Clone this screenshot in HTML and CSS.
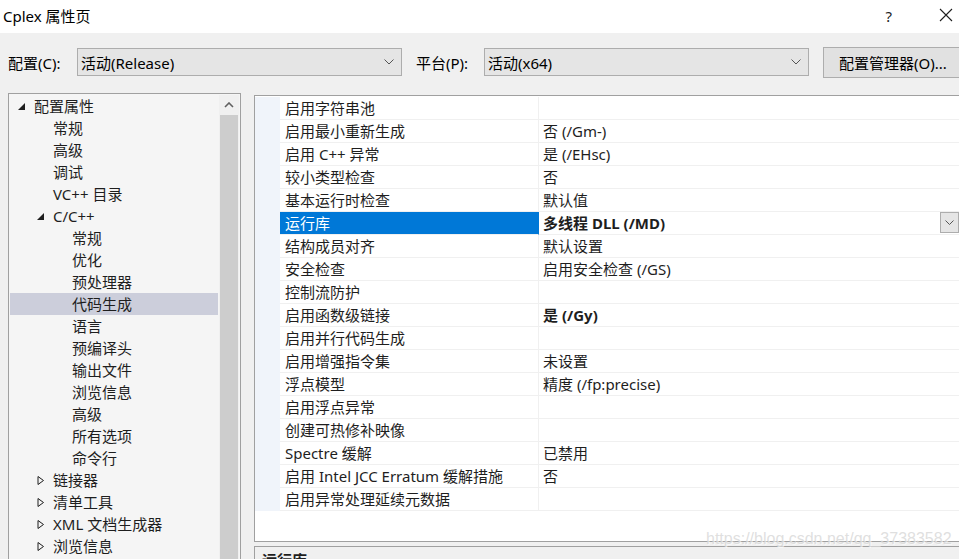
FILE: index.html
```html
<!DOCTYPE html>
<html lang="zh-CN">
<head>
    <meta charset="UTF-8">
    <title>Cplex 属性页</title>
    <link rel="stylesheet" href="styles.css">
</head>
<body>
    <div class="titlebar">
        <span class="title">Cplex 属性页</span>
        <span class="help">?</span>
        <svg class="close" width="14" height="14" viewBox="0 0 14 14"><path d="M1 1 L13 13 M13 1 L1 13" stroke="#1e1e1e" stroke-width="1.1"/></svg>
    </div>

    <div class="toolbar">
        <span class="label">配置(C):</span>
        <div class="combo combo-cfg">
            <span>活动(Release)</span>
            <svg width="10" height="6" viewBox="0 0 10 6"><polyline points="0.5,0.5 5,5 9.5,0.5" fill="none" stroke="#555"/></svg>
        </div>
        <span class="label label-plat">平台(P):</span>
        <div class="combo combo-plat">
            <span>活动(x64)</span>
            <svg width="10" height="6" viewBox="0 0 10 6"><polyline points="0.5,0.5 5,5 9.5,0.5" fill="none" stroke="#555"/></svg>
        </div>
        <button class="btn">配置管理器(O)...</button>
    </div>

    <div class="main">
        <div class="tree">
            <div class="tree-list">
                <div class="node lv0"><span class="twisty"><svg width="7" height="7"><polygon points="7,0 7,7 0,7" fill="#1e1e1e"/></svg></span>配置属性</div>
                <div class="node lv1"><span class="twisty"></span>常规</div>
                <div class="node lv1"><span class="twisty"></span>高级</div>
                <div class="node lv1"><span class="twisty"></span>调试</div>
                <div class="node lv1"><span class="twisty"></span>VC++ 目录</div>
                <div class="node lv1"><span class="twisty"><svg width="7" height="7"><polygon points="7,0 7,7 0,7" fill="#1e1e1e"/></svg></span>C/C++</div>
                <div class="node lv2"><span class="twisty"></span>常规</div>
                <div class="node lv2"><span class="twisty"></span>优化</div>
                <div class="node lv2"><span class="twisty"></span>预处理器</div>
                <div class="node lv2 selected"><span class="twisty"></span>代码生成</div>
                <div class="node lv2"><span class="twisty"></span>语言</div>
                <div class="node lv2"><span class="twisty"></span>预编译头</div>
                <div class="node lv2"><span class="twisty"></span>输出文件</div>
                <div class="node lv2"><span class="twisty"></span>浏览信息</div>
                <div class="node lv2"><span class="twisty"></span>高级</div>
                <div class="node lv2"><span class="twisty"></span>所有选项</div>
                <div class="node lv2"><span class="twisty"></span>命令行</div>
                <div class="node lv1"><span class="twisty"><svg width="7" height="9"><polygon points="1,0.5 6.5,4.5 1,8.5" fill="none" stroke="#1e1e1e"/></svg></span>链接器</div>
                <div class="node lv1"><span class="twisty"><svg width="7" height="9"><polygon points="1,0.5 6.5,4.5 1,8.5" fill="none" stroke="#1e1e1e"/></svg></span>清单工具</div>
                <div class="node lv1"><span class="twisty"><svg width="7" height="9"><polygon points="1,0.5 6.5,4.5 1,8.5" fill="none" stroke="#1e1e1e"/></svg></span>XML 文档生成器</div>
                <div class="node lv1"><span class="twisty"><svg width="7" height="9"><polygon points="1,0.5 6.5,4.5 1,8.5" fill="none" stroke="#1e1e1e"/></svg></span>浏览信息</div>
            </div>
            <div class="scrollbar">
                <div class="scroll-up"><svg width="10" height="6" viewBox="0 0 10 6"><polyline points="1,5 5,1 9,5" fill="none" stroke="#606060" stroke-width="1.6"/></svg></div>
                <div class="scroll-thumb"></div>
            </div>
        </div>

        <div class="right">
            <div class="grid">
                <div class="prop"><span class="gutter"></span><span class="name">启用字符串池</span><span class="value"></span></div>
                <div class="prop"><span class="gutter"></span><span class="name">启用最小重新生成</span><span class="value">否 (/Gm-)</span></div>
                <div class="prop"><span class="gutter"></span><span class="name">启用 C++ 异常</span><span class="value">是 (/EHsc)</span></div>
                <div class="prop"><span class="gutter"></span><span class="name">较小类型检查</span><span class="value">否</span></div>
                <div class="prop"><span class="gutter"></span><span class="name">基本运行时检查</span><span class="value">默认值</span></div>
                <div class="prop active"><span class="gutter"></span><span class="name">运行库</span><span class="value"><b>多线程 DLL (/MD)</b><span class="drop"><svg width="9" height="5" viewBox="0 0 9 5"><polyline points="0.5,0.5 4.5,4.5 8.5,0.5" fill="none" stroke="#555"/></svg></span></span></div>
                <div class="prop"><span class="gutter"></span><span class="name">结构成员对齐</span><span class="value">默认设置</span></div>
                <div class="prop"><span class="gutter"></span><span class="name">安全检查</span><span class="value">启用安全检查 (/GS)</span></div>
                <div class="prop"><span class="gutter"></span><span class="name">控制流防护</span><span class="value"></span></div>
                <div class="prop"><span class="gutter"></span><span class="name">启用函数级链接</span><span class="value"><b>是 (/Gy)</b></span></div>
                <div class="prop"><span class="gutter"></span><span class="name">启用并行代码生成</span><span class="value"></span></div>
                <div class="prop"><span class="gutter"></span><span class="name">启用增强指令集</span><span class="value">未设置</span></div>
                <div class="prop"><span class="gutter"></span><span class="name">浮点模型</span><span class="value">精度 (/fp:precise)</span></div>
                <div class="prop"><span class="gutter"></span><span class="name">启用浮点异常</span><span class="value"></span></div>
                <div class="prop"><span class="gutter"></span><span class="name">创建可热修补映像</span><span class="value"></span></div>
                <div class="prop"><span class="gutter"></span><span class="name">Spectre 缓解</span><span class="value">已禁用</span></div>
                <div class="prop"><span class="gutter"></span><span class="name">启用 Intel JCC Erratum 缓解措施</span><span class="value">否</span></div>
                <div class="prop"><span class="gutter"></span><span class="name">启用异常处理延续元数据</span><span class="value"></span></div>
            </div>
            <div class="desc"><b>运行库</b></div>
        </div>
    </div>

    <div class="watermark">https://blog.csdn.net/qq_37383582</div>
</body>
</html>
```

FILE: styles.css
```css
body {
    margin: 0;
    width: 959px;
    height: 559px;
    overflow: hidden;
    position: relative;
    background-color: #f0f0f0;
    color: #1e1e1e;
    font-family: "Noto Sans", "Noto Sans CJK SC", sans-serif;
    font-size: 15px;
}
.titlebar {
    height: 33px;
    background-color: #fff;
    display: flex;
    align-items: center;
}
.title {
    margin-left: 3px;
    margin-top: -2px;
    color: #000;
}
.help {
    margin-left: auto;
    margin-right: 47px;
    margin-top: -2px;
    color: #222;
}
.close {
    margin-right: 6px;
    margin-top: -3px;
}
.toolbar {
    height: 60px;
    display: flex;
    align-items: center;
    padding-bottom: 2px;
    box-sizing: border-box;
    overflow: hidden;
}
.toolbar > * {
    flex-shrink: 0;
}
.label {
    margin-left: 8px;
    width: 69px;
    color: #000;
}
.label-plat {
    margin-left: 14px;
    width: 68px;
}
.combo {
    height: 28px;
    box-sizing: border-box;
    border: 1px solid #adadad;
    background-color: #e5e5e5;
    display: flex;
    align-items: center;
    padding: 0 7px 0 3px;
    color: #000;
}
.combo span {
    flex: 1;
}
.combo-cfg {
    width: 325px;
}
.combo-plat {
    width: 325px;
}
.btn {
    margin-left: 14px;
    height: 31px;
    width: 150px;
    border: 1px solid #adadad;
    background-color: #e1e1e1;
    font-family: inherit;
    font-size: 15px;
    color: #000;
    text-align: left;
    padding: 0 0 0 15px;
}
.main {
    display: flex;
    align-items: flex-start;
}
.tree {
    flex-shrink: 0;
    margin-left: 8px;
    width: 233px;
    height: 480px;
    box-sizing: border-box;
    border: 1px solid #a0a0a0;
    background-color: #f5f5f5;
    display: flex;
    padding: 1px 1px 0 1px;
}
.tree-list {
    width: 208px;
}
.node {
    height: 22px;
    line-height: 22px;
    display: flex;
    align-items: center;
    white-space: nowrap;
}
.node.selected {
    background-color: #cccedb;
}
.twisty {
    width: 19px;
    display: inline-flex;
    align-items: center;
    padding-left: 3px;
    box-sizing: border-box;
}
.lv0 { padding-left: 5px; }
.lv1 { padding-left: 24px; }
.lv2 { padding-left: 43px; }
.scrollbar {
    width: 20px;
    margin-left: 1px;
    background-color: #f0f0f0;
    display: flex;
    flex-direction: column;
}
.scroll-up {
    height: 20px;
    display: flex;
    align-items: center;
    justify-content: center;
}
.scroll-thumb {
    flex: 1;
    margin: 0 1px;
    background-color: #cdcdcd;
}
.right {
    flex-shrink: 0;
    margin-left: 13px;
    margin-top: 2px;
    width: 710px;
}
.grid {
    height: 447px;
    box-sizing: border-box;
    border: 1px solid #a0a0a0;
    background-color: #fff;
    padding-top: 1px;
}
.prop {
    display: flex;
    height: 23px;
    box-sizing: border-box;
    line-height: 22px;
}
.gutter {
    width: 25px;
    background-color: #f0f4fa;
}
.name {
    width: 259px;
    padding-left: 5px;
    box-sizing: border-box;
    border-bottom: 1px solid #f0f0f0;
    border-right: 1px solid #f0f0f0;
    white-space: nowrap;
}
.value {
    flex: 1;
    padding-left: 4px;
    border-bottom: 1px solid #f0f0f0;
    display: flex;
    white-space: nowrap;
}
.value b {
    flex: 1;
}
.prop.active .name {
    background-color: #0078d7;
    color: #fff;
    border-right-color: #0078d7;
}
.drop {
    width: 19px;
    margin-right: 4px;
    height: 21px;
    box-sizing: border-box;
    border: 1px solid #adadad;
    background-color: #e5e5e5;
    display: flex;
    align-items: center;
    justify-content: center;
}
.desc {
    margin-top: 4px;
    height: 40px;
    box-sizing: border-box;
    border: 1px solid #a0a0a0;
    padding: 2px 0 0 7px;
}
.watermark {
    position: absolute;
    left: 706px;
    top: 530px;
    font-family: "Liberation Sans", sans-serif;
    font-size: 16px;
    color: rgba(215, 215, 215, 0.8);
    text-shadow: 1px 1px 0 rgba(255, 255, 255, 0.6);
}
```
